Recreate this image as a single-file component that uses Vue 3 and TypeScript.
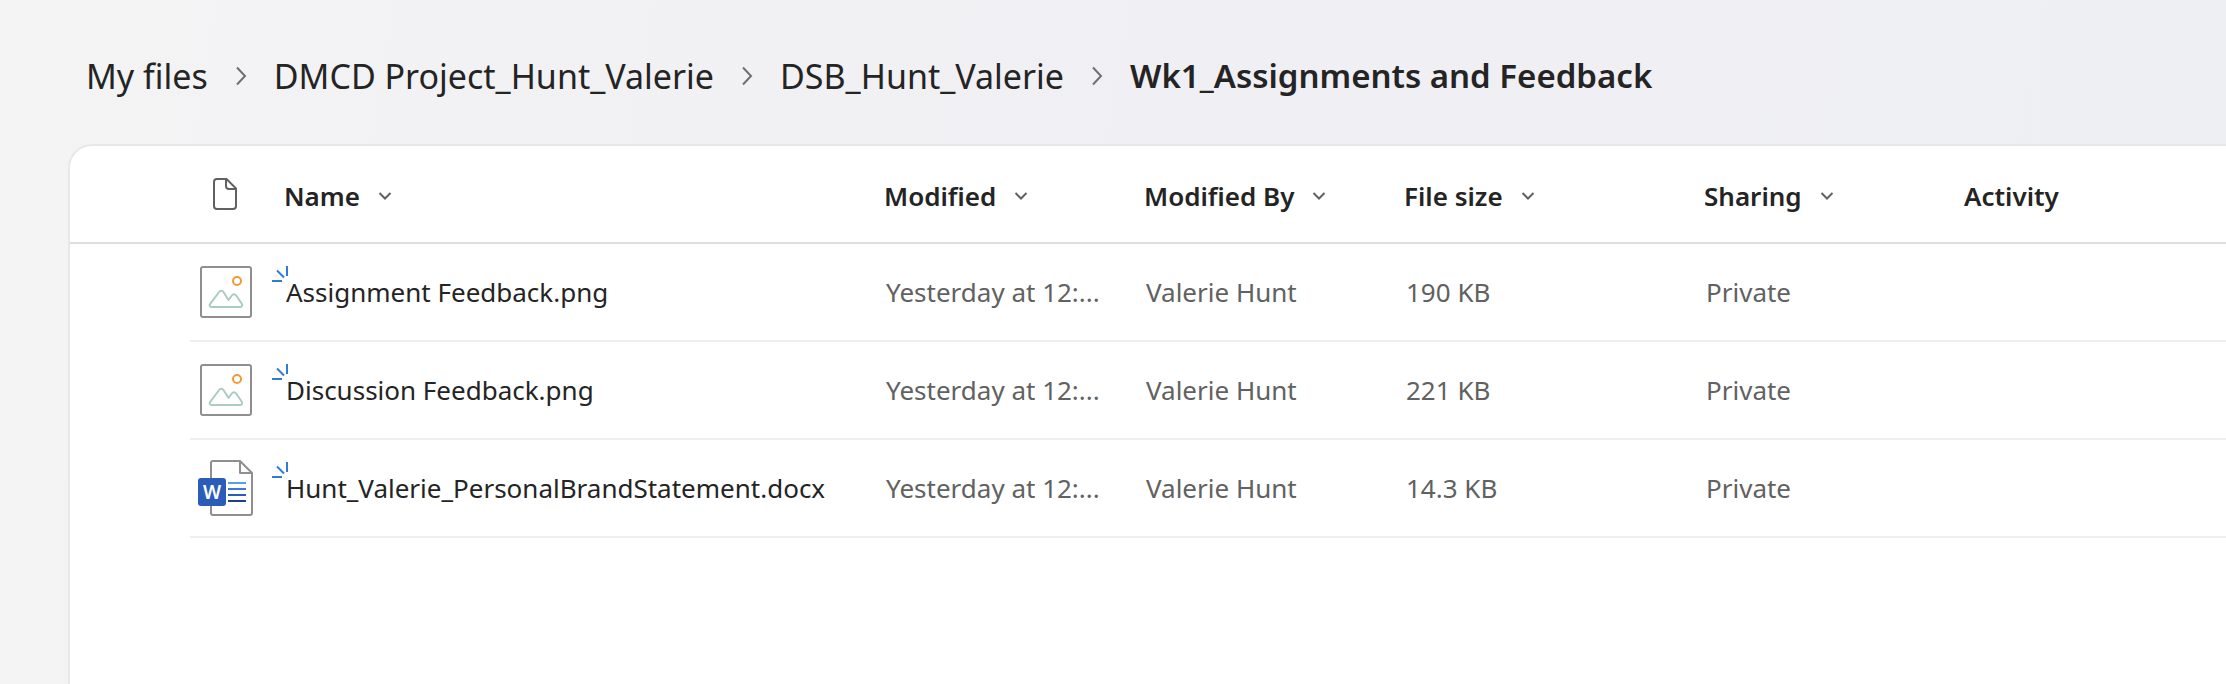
<script setup lang="ts">
interface FileRow {
  kind: 'image' | 'word'
  name: string
  modified: string
  modifiedBy: string
  size: string
  sharing: string
}

const crumbs: string[] = ['My files', 'DMCD Project_Hunt_Valerie', 'DSB_Hunt_Valerie']
const current = 'Wk1_Assignments and Feedback'

const sortable: string[] = ['Name', 'Modified', 'Modified By', 'File size', 'Sharing']

const files: FileRow[] = [
  { kind: 'image', name: 'Assignment Feedback.png', modified: 'Yesterday at 12:...', modifiedBy: 'Valerie Hunt', size: '190 KB', sharing: 'Private' },
  { kind: 'image', name: 'Discussion Feedback.png', modified: 'Yesterday at 12:...', modifiedBy: 'Valerie Hunt', size: '221 KB', sharing: 'Private' },
  { kind: 'word', name: 'Hunt_Valerie_PersonalBrandStatement.docx', modified: 'Yesterday at 12:...', modifiedBy: 'Valerie Hunt', size: '14.3 KB', sharing: 'Private' },
]
</script>

<template>
  <div class="page">
    <nav class="crumbs" aria-label="Breadcrumb">
      <template v-for="crumb in crumbs" :key="crumb">
        <a href="#" class="crumb">{{ crumb }}</a>
        <svg class="crumb-sep" viewBox="0 0 12 20" aria-hidden="true">
          <path d="M2 1.5 10 10 2 18.5" />
        </svg>
      </template>
      <span class="crumb current" aria-current="page">{{ current }}</span>
    </nav>

    <main class="panel">
      <table class="files">
        <colgroup>
          <col class="c-select" />
          <col class="c-icon" />
          <col class="c-name" />
          <col class="c-medium" />
          <col class="c-medium" />
          <col class="c-size" />
          <col class="c-medium" />
          <col />
        </colgroup>
        <thead>
          <tr>
            <td></td>
            <th scope="col" aria-label="File type">
              <svg class="type-icon" viewBox="0 0 26 34" aria-hidden="true">
                <path d="M5 2h9.500l9.500 9.500V29a3 3 0 0 1-3 3H5a3 3 0 0 1-3-3V5a3 3 0 0 1 3-3z" />
                <path d="M14 2v7a3 3 0 0 0 3 3h7" />
              </svg>
            </th>
            <th v-for="label in sortable" :key="label" scope="col" class="label">
              <button type="button" class="sort">
                {{ label }}
                <svg class="chevron" viewBox="0 0 14 8" aria-hidden="true">
                  <path d="M1.500 1 7 6.500 12.500 1" />
                </svg>
              </button>
            </th>
            <th scope="col" class="label">Activity</th>
          </tr>
        </thead>
        <tbody>
          <tr v-for="file in files" :key="file.name">
            <td></td>
            <td class="icon-cell">
              <svg v-if="file.kind === 'image'" class="file-icon" viewBox="0 0 60 60" aria-hidden="true">
                <rect x="5" y="5" width="50" height="50" rx="2" fill="#fff" stroke="#8f8f8f" stroke-width="2" />
                <circle cx="41" cy="19" r="4" fill="none" stroke="#f29a38" stroke-width="2" />
                <path d="M15.500 45h28.500c1.800 0 2.700-1.700 1.800-3.200l-5.600-8.300c-1.200-1.700-3.200-1.700-4.400 0L32.500 38l-5-8c-1.200-1.800-3.200-1.800-4.400 0l-8.900 11.800c-1.200 1.500-.5 3.200 1.300 3.200z" fill="none" stroke="#aacdbf" stroke-width="2" stroke-linejoin="round" />
              </svg>
              <svg v-else class="file-icon" viewBox="0 0 60 60" aria-hidden="true">
                <path d="M17 3h27l12 12v40a2 2 0 0 1-2 2H17a2 2 0 0 1-2-2V5a2 2 0 0 1 2-2z" fill="#fff" stroke="#8f8f8f" stroke-width="2" />
                <path d="M44 3v12h12" fill="none" stroke="#8f8f8f" stroke-width="2" stroke-linejoin="round" />
                <rect x="2" y="20" width="28" height="28" rx="3" fill="#2b5cb8" />
                <path d="M32 25h18" stroke="#55a2ea" stroke-width="2" />
                <path d="M32 31h18" stroke="#3a7bd5" stroke-width="2" />
                <path d="M32 37h18" stroke="#2b5cb8" stroke-width="2" />
                <path d="M32 43h18" stroke="#1d3f8c" stroke-width="2" />
                <text x="16" y="41" text-anchor="middle" class="word-letter">W</text>
              </svg>
            </td>
            <td>
              <span class="name-wrap">
                <svg class="new-mark" viewBox="0 0 18 18" aria-hidden="true">
                  <path d="M0 16h10M5 5.500l7 7M15 1v10" />
                </svg>
                <a href="#" class="name">{{ file.name }}</a>
              </span>
            </td>
            <td>{{ file.modified }}</td>
            <td>{{ file.modifiedBy }}</td>
            <td>{{ file.size }}</td>
            <td>{{ file.sharing }}</td>
            <td></td>
          </tr>
        </tbody>
      </table>
    </main>
  </div>
</template>

<style>
body {
  margin: 0;
}
</style>

<style scoped>
.page {
  box-sizing: border-box;
  min-height: 100vh;
  display: flex;
  flex-direction: column;
  padding-left: 68px;
  overflow: hidden;
  background: linear-gradient(100deg, #f4f4f5 0%, #f2f2f4 20%, #f1f0f3 38%, #efeff4 60%, #eeeff3 100%);
  font-family: "Segoe UI", "Noto Sans", "Open Sans", sans-serif;
  color: #242424;
}

.crumbs {
  display: flex;
  align-items: center;
  gap: 27px;
  height: 144px;
  padding: 8px 18px 0;
  box-sizing: border-box;
  font-size: 34px;
  line-height: 48px;
  white-space: nowrap;
}

.crumb {
  color: inherit;
  text-decoration: none;
}

.current {
  font-size: 33px;
  font-weight: 600;
}

.crumb-sep {
  width: 12px;
  height: 20px;
  fill: none;
  stroke: #707070;
  stroke-width: 2;
}

.panel {
  flex: 1;
  background: #fff;
  border: solid #e8e8e8;
  border-width: 2px 0 0 2px;
  border-top-left-radius: 24px;
}

.files {
  width: 100%;
  table-layout: fixed;
  border-collapse: separate;
  border-spacing: 0;
  font-size: 26px;
  line-height: 36px;
  white-space: nowrap;
}

.c-select { width: 120px; }
.c-icon { width: 94px; }
.c-name { width: 600px; }
.c-medium { width: 260px; }
.c-size { width: 300px; }

.files th,
.files td {
  box-sizing: border-box;
  height: 98px;
  padding: 0;
  text-align: left;
  vertical-align: middle;
}

.files thead th,
.files thead td {
  border-bottom: 2px solid #dedede;
  font-weight: 600;
}

.files thead .label {
  padding-top: 3px;
}

.files tbody td {
  padding-left: 2px;
  color: #616161;
}

.files tbody td:not(:first-child) {
  border-bottom: 2px solid #efefef;
}

.type-icon {
  display: block;
  width: 26px;
  height: 34px;
  margin-left: 22px;
  fill: none;
  stroke: #616161;
  stroke-width: 2;
}

.sort {
  display: inline-flex;
  align-items: center;
  gap: 18px;
  padding: 0;
  border: 0;
  background: none;
  color: inherit;
  font: inherit;
}

.chevron {
  width: 14px;
  height: 8px;
  fill: none;
  stroke: #616161;
  stroke-width: 2;
}

.files tbody .icon-cell {
  padding-left: 6px;
}

.file-icon {
  display: block;
  width: 60px;
  height: 60px;
}

.word-letter {
  fill: #fff;
  font-size: 19px;
  font-weight: 600;
}

.name-wrap {
  position: relative;
}

.new-mark {
  position: absolute;
  left: -14px;
  top: -9px;
  width: 18px;
  height: 18px;
  fill: none;
  stroke: #2f7cd6;
  stroke-width: 2;
}

.name {
  color: #242424;
  text-decoration: none;
}
</style>
